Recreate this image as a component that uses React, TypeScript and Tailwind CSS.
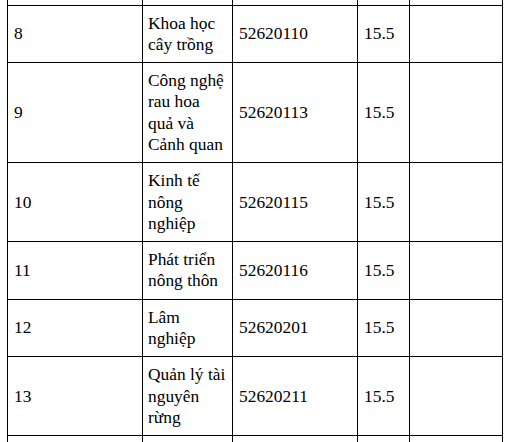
import React from "react"

interface Row {
  stt: string
  name: string[]
  code: string
  score: string
}

const rows: Row[] = [
  { stt: "8", name: ["Khoa học", "cây trồng"], code: "52620110", score: "15.5" },
  { stt: "9", name: ["Công nghệ", "rau hoa", "quả và", "Cảnh quan"], code: "52620113", score: "15.5" },
  { stt: "10", name: ["Kinh tế", "nông", "nghiệp"], code: "52620115", score: "15.5" },
  { stt: "11", name: ["Phát triển", "nông thôn"], code: "52620116", score: "15.5" },
  { stt: "12", name: ["Lâm", "nghiệp"], code: "52620201", score: "15.5" },
  { stt: "13", name: ["Quản lý tài", "nguyên", "rừng"], code: "52620211", score: "15.5" },
]

const text = "font-['Liberation_Serif','Times_New_Roman',serif] text-[17.4px] leading-[21.3px] text-black"
const cell = `border border-black px-[6px] py-[7px] align-middle ${text}`

export default function App() {
  return (
    <div className={`h-[442px] overflow-hidden bg-white pl-[7px] ${text}`}>
      <table className={`w-[495px] table-fixed border-collapse ${text}`}>
        <colgroup>
          <col className="w-[135px]" />
          <col className="w-[90px]" />
          <col className="w-[125px]" />
          <col className="w-[52px]" />
          <col className="w-[93px]" />
        </colgroup>
        <tbody>
          {/* tail of the previous row, cut off at the top */}
          <tr className="h-[5px]">
            <td className="border-x border-black p-0" />
            <td className="border-x border-black p-0" />
            <td className="border-x border-black p-0" />
            <td className="border-x border-black p-0" />
            <td className="border-x border-black p-0" />
          </tr>
          {rows.map((r) => (
            <tr key={r.stt}>
              <td className={cell}>{r.stt}</td>
              <td className={`border border-black py-[7px] pl-[5px] pr-[2px] align-middle ${text}`}>
                {r.name.map((line, i) => (
                  <div key={i} className="whitespace-nowrap">
                    {line}
                  </div>
                ))}
              </td>
              <td className={cell}>{r.code}</td>
              <td className={cell}>{r.score}</td>
              <td className={cell}></td>
            </tr>
          ))}
          <tr className="h-[40px]">
            <td className={cell}></td>
            <td className={cell}></td>
            <td className={cell}></td>
            <td className={cell}></td>
            <td className={cell}></td>
          </tr>
        </tbody>
      </table>
    </div>
  )
}
